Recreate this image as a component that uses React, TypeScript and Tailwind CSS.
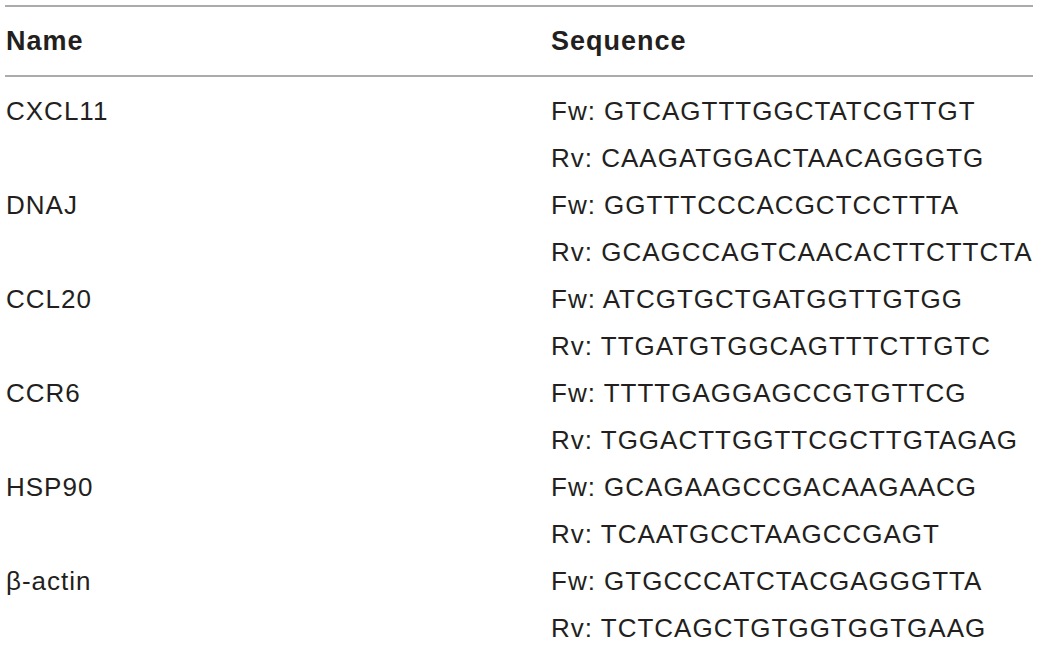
const rows = [
  { name: 'CXCL11', fw: 'GTCAGTTTGGCTATCGTTGT', rv: 'CAAGATGGACTAACAGGGTG' },
  { name: 'DNAJ', fw: 'GGTTTCCCACGCTCCTTTA', rv: 'GCAGCCAGTCAACACTTCTTCTA' },
  { name: 'CCL20', fw: 'ATCGTGCTGATGGTTGTGG', rv: 'TTGATGTGGCAGTTTCTTGTC' },
  { name: 'CCR6', fw: 'TTTTGAGGAGCCGTGTTCG', rv: 'TGGACTTGGTTCGCTTGTAGAG' },
  { name: 'HSP90', fw: 'GCAGAAGCCGACAAGAACG', rv: 'TCAATGCCTAAGCCGAGT' },
  { name: 'β-actin', fw: 'GTGCCCATCTACGAGGGTTA', rv: 'TCTCAGCTGTGGTGGTGAAG' },
]

function App() {
  return (
    <div className="h-[649px] w-[1039px] overflow-hidden bg-white text-[#231f20] font-['Liberation_Sans',Arial,sans-serif]">
      <div className="ml-[5px] mr-[6px] pt-[5px]">
        <div className="flex h-[72px] items-center border-y-2 border-[#ababab] text-[27px] font-bold tracking-[1px]">
          <div className="w-[546px] pl-[1px]">Name</div>
          <div>Sequence</div>
        </div>
        <div className="pt-[11px] text-[26px] leading-[47px] tracking-[1px]">
          {rows.map((r) => (
            <div key={r.name} className="flex">
              <div className="w-[546px] pl-[1px]">{r.name}</div>
              <div className="flex flex-col">
                <div>Fw: {r.fw}</div>
                <div>Rv: {r.rv}</div>
              </div>
            </div>
          ))}
        </div>
      </div>
    </div>
  )
}

export default App
